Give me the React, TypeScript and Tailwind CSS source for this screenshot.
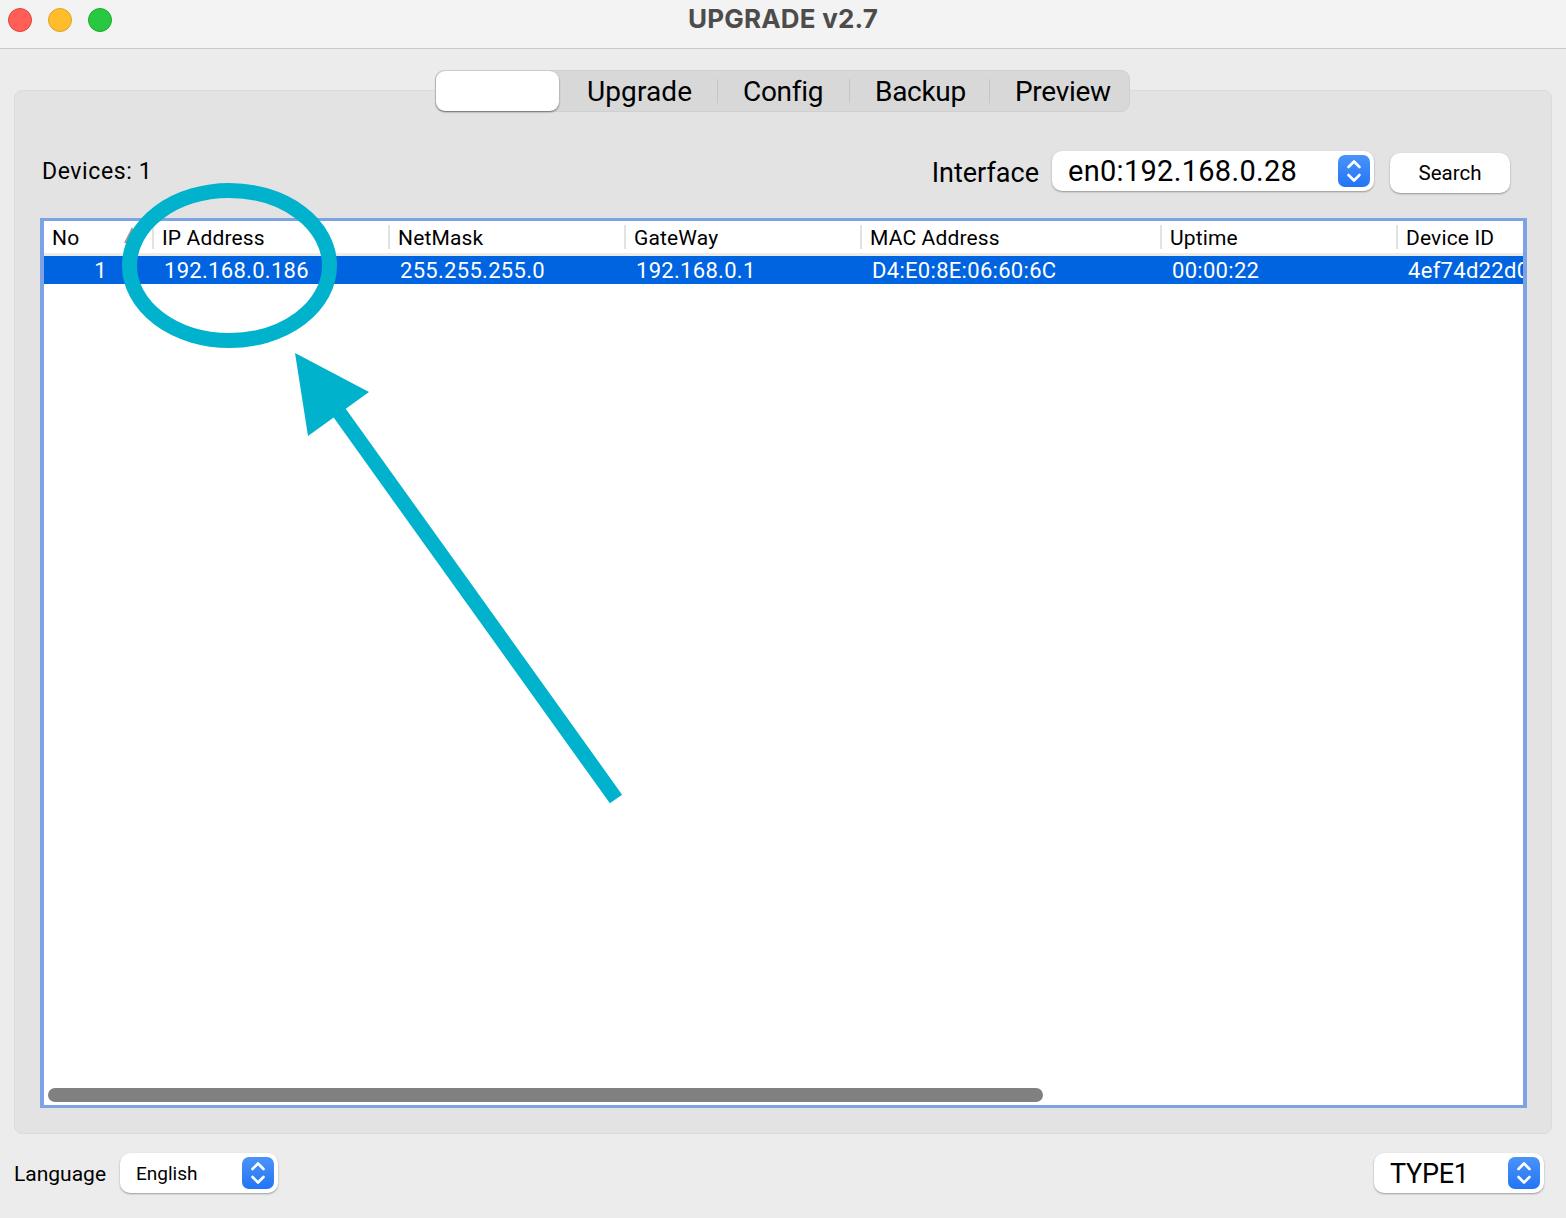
import type { ReactNode } from "react";

const columns = [
  { title: "No", width: "w-[110px]", value: "1" },
  { title: "IP Address", width: "w-[236px]", value: "192.168.0.186" },
  { title: "NetMask", width: "w-[236px]", value: "255.255.255.0" },
  { title: "GateWay", width: "w-[236px]", value: "192.168.0.1" },
  { title: "MAC Address", width: "w-[300px]", value: "D4:E0:8E:06:60:6C" },
  { title: "Uptime", width: "w-[236px]", value: "00:00:22" },
  { title: "Device ID", width: "w-[125px]", value: "4ef74d22d0c8" },
];

function Stepper() {
  return (
    <div className="flex h-[32px] w-[32px] shrink-0 items-center justify-center rounded-[7px] bg-gradient-to-b from-[#4a93f8] to-[#2274f6]">
      <svg width="18" height="26" viewBox="0 0 18 26" fill="none" stroke="white" strokeWidth="2.6" strokeLinecap="round" strokeLinejoin="round">
        <path d="M3.5 9 L9 3.5 L14.5 9" />
        <path d="M3.5 17 L9 22.5 L14.5 17" />
      </svg>
    </div>
  );
}

function Select({ className, children }: { className: string; children: ReactNode }) {
  return (
    <div className={`flex h-[40px] items-center justify-between rounded-[10px] bg-white pr-[4px] shadow-[0_1px_2px_rgba(0,0,0,0.35)] ${className}`}>
      <span className="pt-[2px]">{children}</span>
      <Stepper />
    </div>
  );
}

function TabItem({ label, width, last }: { label: string; width: string; last?: boolean }) {
  return (
    <div className={`flex h-[24px] items-center pl-[25px] pt-[2px] ${width} ${last ? "" : "border-r border-[#c4c4c4]"}`}>
      {label}
    </div>
  );
}

export default function App() {
  return (
    <div className="relative flex h-[1218px] w-[1566px] flex-col overflow-hidden bg-[#ececec] font-['Roboto',sans-serif] text-black">
      <header className="relative flex h-[49px] shrink-0 items-center justify-center border-b border-[#c9c9c9] bg-[#f3f3f3] pb-[10px]">
        <div className="absolute left-[8px] top-[8px] flex gap-[16px]">
          <span className="h-[24px] w-[24px] rounded-full border border-[#e0443e] bg-[#ff5f57]" />
          <span className="h-[24px] w-[24px] rounded-full border border-[#dea123] bg-[#ffbd2e]" />
          <span className="h-[24px] w-[24px] rounded-full border border-[#1aab29] bg-[#28c840]" />
        </div>
        <h1 className="font-['Inter',sans-serif] text-[26px] leading-none font-bold tracking-[0.2px] text-[#4c4c4c]">UPGRADE v2.7</h1>
      </header>

      <main className="flex-1 px-[14px] pt-[41px]">
        <section className="flex h-[1044px] flex-col rounded-[8px] border border-[#dcdcdc] bg-[#e3e3e3]">
          <div className="-mt-[21px] ml-[420px] flex h-[42px] w-[695px] items-center rounded-[9px] border border-[#d0d0d0] bg-[#d8d8d8] text-[28px] tracking-[-0.3px]">
            <div className="h-[40px] w-[123px] shrink-0 self-start rounded-[9px] bg-white shadow-[0_1px_2px_rgba(0,0,0,0.5)]" />
            <div className="flex h-[24px] w-[159px] items-center border-r border-[#c4c4c4] pl-[28px] pt-[2px] tracking-[0.1px]">Upgrade</div>
            <TabItem label="Config" width="w-[132px]" />
            <TabItem label="Backup" width="w-[140px]" />
            <TabItem label="Preview" width="w-[139px]" last />
          </div>

          <div className="mt-[39px] flex h-[42px] items-center justify-between pl-[27px] pr-[41px]">
            <span className="text-[23px] tracking-[0.6px]">Devices: 1</span>
            <div className="flex items-center">
              <span className="mr-[13px] pt-[3px] text-[27px]">Interface</span>
              <Select className="mb-[2px] w-[322px] pl-[16px] text-[29px] tracking-[0.3px]">en0:192.168.0.28</Select>
              <button className="ml-[16px] mt-[2px] h-[40px] w-[120px] rounded-[10px] bg-white text-[20.5px] shadow-[0_1px_2px_rgba(0,0,0,0.35)]">Search</button>
            </div>
          </div>

          <div className="ml-[25px] mt-[25px] flex h-[890px] w-[1487px] flex-col overflow-hidden border-x-[4px] border-y-[3px] border-[#7ea3e4] bg-white">
            <div className="flex h-[35px] shrink-0 items-center border-b-[3px] border-[#ececec] text-[21px] tracking-[0.15px]">
              {columns.map((col, i) => (
                <div key={col.title} className={`flex h-[24px] shrink-0 items-center pl-[8px] pt-[3px] ${col.width} ${i < columns.length - 1 ? "border-r-2 border-[#e2e2e2]" : ""}`}>
                  {col.title}
                </div>
              ))}
            </div>
            <div className="flex h-[28px] shrink-0 items-center bg-[#0064e1] text-[22px] tracking-[0.3px] text-white">
              {columns.map((col, i) => (
                <div key={col.title} className={`shrink-0 overflow-hidden whitespace-nowrap ${col.width} ${i === 0 ? "pr-[47px] text-right" : "pl-[10px]"}`}>
                  {col.value}
                </div>
              ))}
            </div>
            <div className="flex-1" />
            <div className="mb-[3px] ml-[4px] h-[14px] w-[995px] rounded-full bg-[#808080]" />
          </div>
        </section>

        <footer className="mt-[19px] flex items-center justify-between pr-[8px]">
          <div className="flex items-center">
            <span className="mr-[13px] w-[93px] pt-[4px] text-[21px]">Language</span>
            <Select className="w-[158px] pl-[16px] text-[19px]">English</Select>
          </div>
          <Select className="w-[170px] pl-[16px] text-[27px] tracking-[-0.3px]">TYPE1</Select>
        </footer>
      </main>

      {/* annotation drawn on top of the screenshot */}
      <svg className="pointer-events-none absolute left-0 top-0" width="1566" height="1218" viewBox="0 0 1566 1218" fill="none">
        <path d="M132 227 L140 243 L124 243 Z" fill="#9a9a9a" />
        <ellipse cx="229.5" cy="265.5" rx="100" ry="75" stroke="#00b2cb" strokeWidth="15" />
        <path d="M616 799 L336 408" stroke="#00b2cb" strokeWidth="15" />
        <path d="M295 353 L369 392 L308 436 Z" fill="#00b2cb" />
      </svg>
    </div>
  );
}
